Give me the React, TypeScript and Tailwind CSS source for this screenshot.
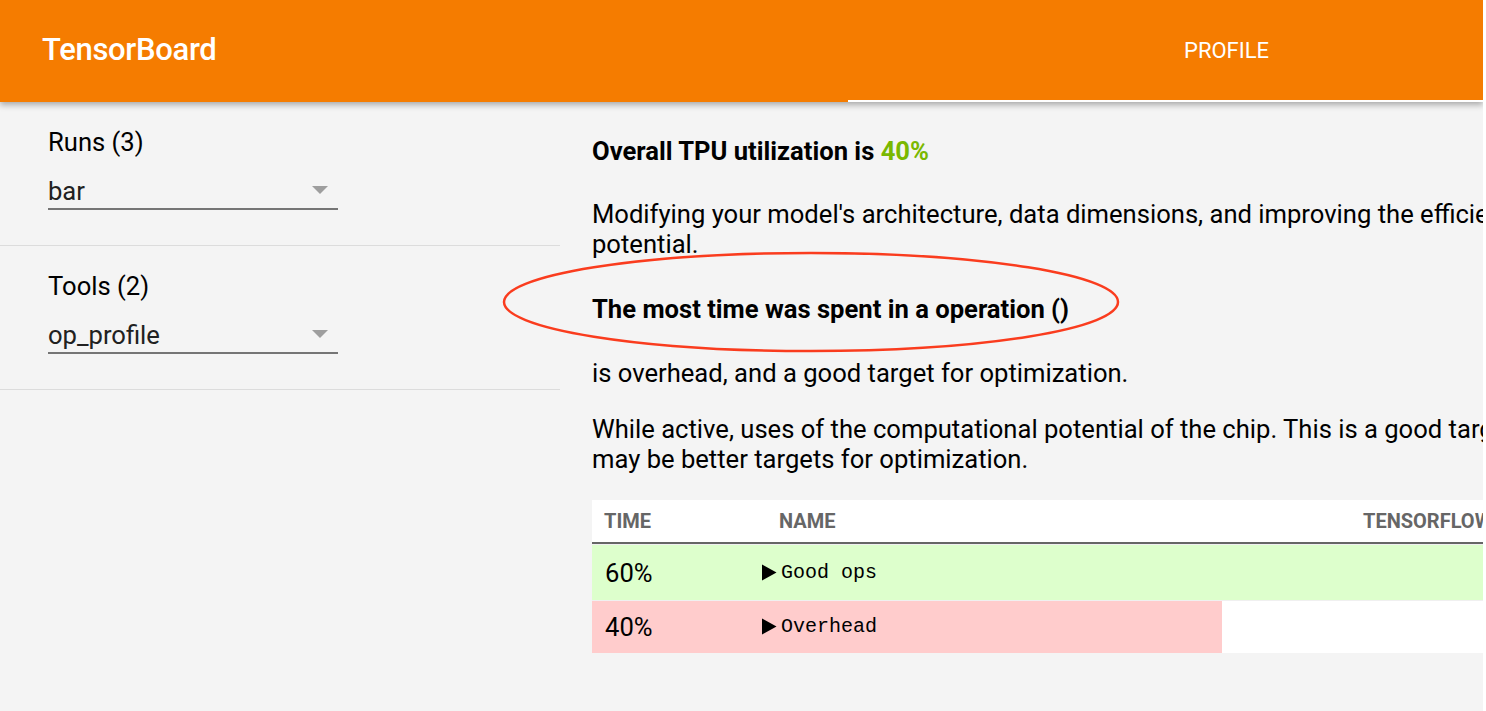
import React from 'react'

type OpRow = { time: string; name: string; frac: number; bg: string; h: string }

const rows: OpRow[] = [
  { time: '60%', name: 'Good ops', frac: 0.6, bg: 'bg-[#ddffcc]', h: 'h-[56px]' },
  { time: '40%', name: 'Overhead', frac: 0.4, bg: 'bg-[#ffcccc]', h: 'h-[53px]' },
]

function Caret() {
  return (
    <svg width="16" height="17" viewBox="0 0 16 17" className="shrink-0 mb-[2px]">
      <path d="M1 0.5 L15.5 8.5 L1 16.5 Z" fill="#000" />
    </svg>
  )
}

function Dropdown({ label, value }: { label: string; value: string }) {
  return (
    <div className="pt-[26px] pb-[35px] px-[48px] border-b border-[#dcdcdc]">
      <div className="text-[25.6px] leading-[28px] text-black">{label}</div>
      <div className="mt-[18px] h-[36px] w-[290px] flex items-center justify-between border-b-2 border-[#757575]">
        <span className="text-[25.6px] text-[#212121]">{value}</span>
        <svg width="16" height="8" viewBox="0 0 16 8" className="mr-[10px] mb-[2px]">
          <path d="M0 0 L16 0 L8 8 Z" fill="#9e9e9e" />
        </svg>
      </div>
    </div>
  )
}

export default function App() {
  return (
    <div className="relative h-screen w-full flex bg-white overflow-hidden font-['Roboto',sans-serif]">
      <div className="flex-1 flex flex-col bg-[#f4f4f4] overflow-hidden">
        {/* Toolbar */}
        <div className="relative z-10 h-[102px] shrink-0 flex bg-[#f57c00] shadow-[0_3px_6px_rgba(0,0,0,0.3)]">
          <div className="w-[848px] shrink-0 flex items-center pl-[42px] pb-[2px]">
            <span className="text-white text-[31px] font-medium tracking-[-0.3px]">TensorBoard</span>
          </div>
          <div className="flex-1 flex items-center pl-[336px] border-b-[2px] border-white">
            <span className="text-white text-[22px]">PROFILE</span>
          </div>
        </div>

        <div className="flex-1 flex">
          {/* Sidebar */}
          <div className="w-[560px] shrink-0">
            <Dropdown label="Runs (3)" value="bar" />
            <Dropdown label="Tools (2)" value="op_profile" />
          </div>

          {/* Main */}
          <div className="flex-1 min-w-0 pl-[32px] pt-[34px] text-[25.6px] leading-[30px] text-black whitespace-nowrap">
            <div className="font-bold">
              Overall TPU utilization is <span className="text-[#7ab800]">40%</span>
            </div>
            <div className="mt-[33px]">
              <div>
                Modifying your model's architecture, data dimensions, and improving the efficiency of CPU operations may help reach the TPU's FLOPS
              </div>
              <div>potential.</div>
            </div>
            <div className="mt-[35px] font-bold">The most time was spent in a operation ()</div>
            <div className="mt-[34px]">is overhead, and a good target for optimization.</div>
            <div className="mt-[26px]">
              <div>
                While active, uses of the computational potential of the chip. This is a good target for optimization, but operations with lower utilization
              </div>
              <div>may be better targets for optimization.</div>
            </div>

            {/* Op table */}
            <div className="mt-[26px] w-[1575px]">
              <div className="h-[44px] flex items-center bg-white border-b-2 border-[#666] text-[20px] font-bold text-[#666] uppercase">
                <div className="w-[187px] pl-[12px]">Time</div>
                <div className="w-[584px]">Name</div>
                <div>TensorFlow op name</div>
              </div>
              {rows.map((r) => (
                <div key={r.name} className={`relative ${r.h} bg-white border-t border-[#f0f0f0]`}>
                  <div className={`absolute inset-y-0 left-0 ${r.bg}`} style={{ width: `${r.frac * 100}%` }} />
                  <div className="relative h-full flex items-center">
                    <div className="w-[169px] pl-[13px] text-[25.6px]">{r.time}</div>
                    <div className="flex items-end gap-[4px]">
                      <Caret />
                      <span className="font-['Liberation_Mono',monospace] text-[20px] leading-[20px]">{r.name}</span>
                    </div>
                  </div>
                </div>
              ))}
            </div>
          </div>
        </div>
      </div>
      <div className="w-[3px] shrink-0 bg-white" />

      {/* Annotation */}
      <svg
        className="absolute left-[500px] top-[250px] pointer-events-none"
        width="622"
        height="106"
        viewBox="0 0 622 106"
      >
        <ellipse cx="311" cy="52" rx="307" ry="49" fill="none" stroke="#fa3c1e" strokeWidth="2.5" />
      </svg>
    </div>
  )
}
